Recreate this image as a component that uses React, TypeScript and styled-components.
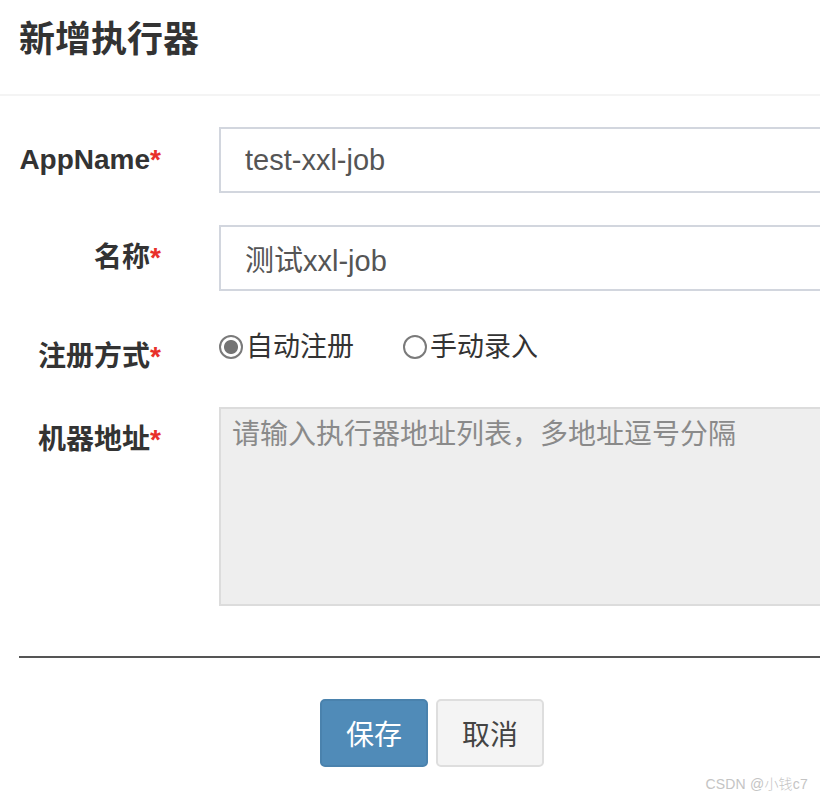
import { useState } from 'react'
import styled, { createGlobalStyle } from 'styled-components'

const GlobalStyle = createGlobalStyle`
  html, body {
    margin: 0;
    padding: 0;
    background: #fff;
    overflow: hidden;
  }
  body {
    font-family: "Liberation Sans", "Noto Sans CJK SC", sans-serif;
    color: #333;
  }
  * {
    box-sizing: border-box;
  }
`

const Page = styled.div`
  position: relative;
  width: 820px;
  height: 798px;
  overflow: hidden;
`

const Header = styled.header`
  padding: 20px 19px 34px;
  border-bottom: 2px solid #f4f4f4;
`

const Title = styled.h4`
  margin: 0;
  font-size: 36px;
  line-height: 40px;
  font-weight: bold;
  color: #333;
`

const Form = styled.form`
  padding-top: 31px;
`

const Row = styled.div<{ $gap?: number }>`
  display: grid;
  grid-template-columns: 161px 1fr;
  column-gap: 58px;
  margin-bottom: ${(p) => (p.$gap ?? 32)}px;
`

const Label = styled.label<{ $top?: number }>`
  display: block;
  text-align: right;
  font-size: 28px;
  line-height: 40px;
  font-weight: bold;
  color: #333;
  padding-top: ${(p) => (p.$top ?? 13)}px;
  white-space: nowrap;
  .req {
    color: #e8312a;
  }
`

const TextInput = styled.input`
  display: block;
  width: calc(100% + 20px);
  height: 66px;
  padding: 0 24px;
  border: 2px solid #d2d6de;
  border-radius: 0;
  font-family: inherit;
  font-size: 29px;
  color: #555;
  background: #fff;
  outline: none;
`

const RadioGroup = styled.div`
  display: flex;
  align-items: center;
  gap: 49px;
  padding-top: 3px;
  height: 43px;
`

const RadioItem = styled.label`
  display: flex;
  align-items: center;
  gap: 3px;
  font-size: 27px;
  line-height: 40px;
  color: #333;
  cursor: pointer;
`

const Radio = styled.input`
  appearance: none;
  margin: 0;
  width: 24px;
  height: 24px;
  border-radius: 50%;
  border: 2px solid #7a7a7a;
  background: #fff;
  &:checked {
    background: radial-gradient(circle, #747474 0 6.5px, #fff 7.5px);
  }
`

const TextArea = styled.textarea`
  display: block;
  width: calc(100% + 20px);
  height: 199px;
  padding: 6px 11px;
  border: 2px solid #dcdcdc;
  border-radius: 0;
  background: #eee;
  resize: none;
  font-family: inherit;
  font-size: 28px;
  line-height: 40px;
  color: #555;
  outline: none;
  &::placeholder {
    color: #8a8a8a;
  }
`

const Divider = styled.hr`
  margin: 50px 0 41px 19px;
  border: 0;
  border-top: 2px solid #555;
`

const Footer = styled.div`
  display: flex;
  gap: 8px;
  padding-left: 320px;
`

const Button = styled.button<{ $primary?: boolean }>`
  width: 108px;
  height: 68px;
  border-radius: 5px;
  font-family: inherit;
  font-size: 28px;
  cursor: pointer;
  border: 2px solid ${(p) => (p.$primary ? '#4a82ad' : '#dedede')};
  background: ${(p) => (p.$primary ? '#508bb8' : '#f4f4f4')};
  color: ${(p) => (p.$primary ? '#fff' : '#444')};
`

const Watermark = styled.span`
  position: absolute;
  right: 12px;
  top: 773px;
  font-size: 14px;
  font-weight: 300;
  color: #c4c4c4;
  letter-spacing: 0.2px;
`

export default function App() {
  const [mode, setMode] = useState<'auto' | 'manual'>('auto')
  return (
    <Page>
      <GlobalStyle />
      <Header>
        <Title>新增执行器</Title>
      </Header>
      <Form onSubmit={(e) => e.preventDefault()}>
        <Row>
          <Label>
            AppName<span className="req">*</span>
          </Label>
          <TextInput defaultValue="test-xxl-job" />
        </Row>
        <Row $gap={33}>
          <Label>
            名称<span className="req">*</span>
          </Label>
          <TextInput defaultValue="测试xxl-job" />
        </Row>
        <Row $gap={30}>
          <Label>
            注册方式<span className="req">*</span>
          </Label>
          <RadioGroup>
            <RadioItem>
              <Radio
                type="radio"
                name="addressType"
                checked={mode === 'auto'}
                onChange={() => setMode('auto')}
              />
              自动注册
            </RadioItem>
            <RadioItem>
              <Radio
                type="radio"
                name="addressType"
                checked={mode === 'manual'}
                onChange={() => setMode('manual')}
              />
              手动录入
            </RadioItem>
          </RadioGroup>
        </Row>
        <Row $gap={0}>
          <Label>
            机器地址<span className="req">*</span>
          </Label>
          <TextArea
            placeholder="请输入执行器地址列表，多地址逗号分隔"
            readOnly={mode === 'auto'}
          />
        </Row>
        <Divider />
        <Footer>
          <Button type="submit" $primary>
            保存
          </Button>
          <Button type="button">取消</Button>
        </Footer>
      </Form>
      <Watermark>CSDN @小钱c7</Watermark>
    </Page>
  )
}
